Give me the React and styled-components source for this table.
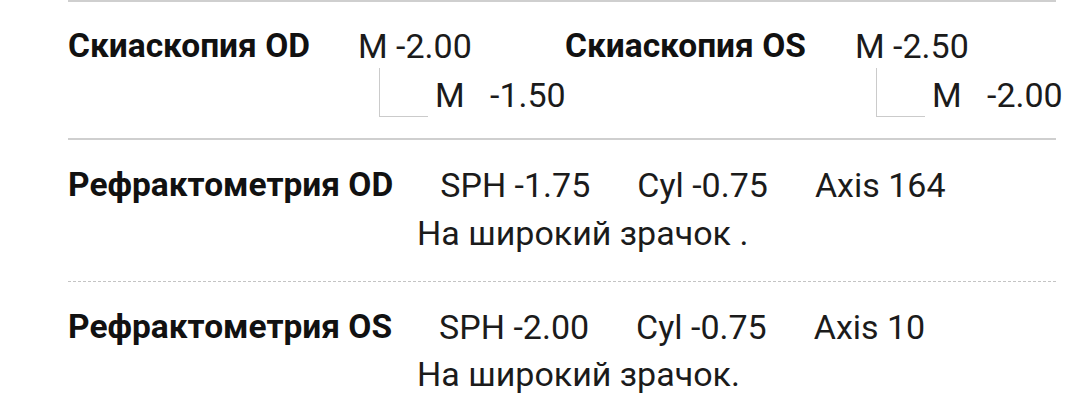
import React from 'react'
import styled, { createGlobalStyle } from 'styled-components'

const Global = createGlobalStyle`
  body {
    margin: 0;
    background: #ffffff;
    font-family: Roboto, 'Noto Sans', sans-serif;
    color: #1b1b1b;
  }
`

const Page = styled.div`
  width: 988px;
  margin-left: 68px;
`

const Section = styled.div`
  border-top: ${p => p.dotted ? '1px dashed #c4c4c4' : '2px solid #cfcfcf'};
  padding: ${p => p.pad};
`

const Halves = styled.div`
  display: flex;
`

const Half = styled.div`
  display: flex;
  width: ${p => p.w}px;
  flex: none;
`

const Label = styled.div`
  font-size: 33.5px;
  line-height: 40px;
  font-weight: 700;
  color: #111;
  width: ${p => (p.w ? p.w + 'px' : 'auto')};
  flex: none;
  white-space: nowrap;
`

const Value = styled.div`
  font-size: 34px;
  line-height: 40px;
  white-space: pre;
`

const ValueCol = styled.div`
  display: flex;
  flex-direction: column;
  margin-left: -2px;
`

const SubRow = styled.div`
  display: flex;
  align-items: flex-end;
  margin-top: 2px;
  margin-left: 21px;
  gap: 7px;
  ${Value} {
    margin-bottom: 2px;
  }
`

const Bracket = styled.div`
  width: 48px;
  height: 48px;
  border-left: 1px solid #cbcbcb;
  border-bottom: 1px solid #cbcbcb;
  flex: none;
`

const Line = styled.div`
  display: flex;
  gap: 47px;
`

const Note = styled.div`
  font-size: 34px;
  line-height: 40px;
  margin-top: ${p => p.mt}px;
  padding-left: 349px;
  white-space: pre;
`

const skia = [
  { label: 'Скиаскопия OD', main: 'M -2.00', sub: 'M   -1.50', w: 497 },
  { label: 'Скиаскопия OS', main: 'M -2.50', sub: 'M   -2.00', w: 491 },
]

const refr = [
  { label: 'Рефрактометрия OD', sph: '-1.75', cyl: '-0.75', axis: '164', note: 'На широкий зрачок .', dotted: false, pad: '25px 0 28px', mt: 8 },
  { label: 'Рефрактометрия OS', sph: '-2.00', cyl: '-0.75', axis: '10', note: 'На широкий зрачок.', dotted: true, pad: '25px 0 20px', mt: 7 },
]

export default function App() {
  return (
    <Page>
      <Global />
      <Section pad="24px 0 21px">
        <Halves>
          {skia.map(s => (
            <Half key={s.label} w={s.w}>
              <Label w={292}>{s.label}</Label>
              <ValueCol>
                <Value>{s.main}</Value>
                <SubRow>
                  <Bracket />
                  <Value>{s.sub}</Value>
                </SubRow>
              </ValueCol>
            </Half>
          ))}
        </Halves>
      </Section>
      {refr.map(r => (
        <Section key={r.label} dotted={r.dotted} pad={r.pad}>
          <Line>
            <Label>{r.label}</Label>
            <Value>SPH {r.sph}</Value>
            <Value>Cyl {r.cyl}</Value>
            <Value>Axis {r.axis}</Value>
          </Line>
          <Note mt={r.mt}>{r.note}</Note>
        </Section>
      ))}
    </Page>
  )
}
